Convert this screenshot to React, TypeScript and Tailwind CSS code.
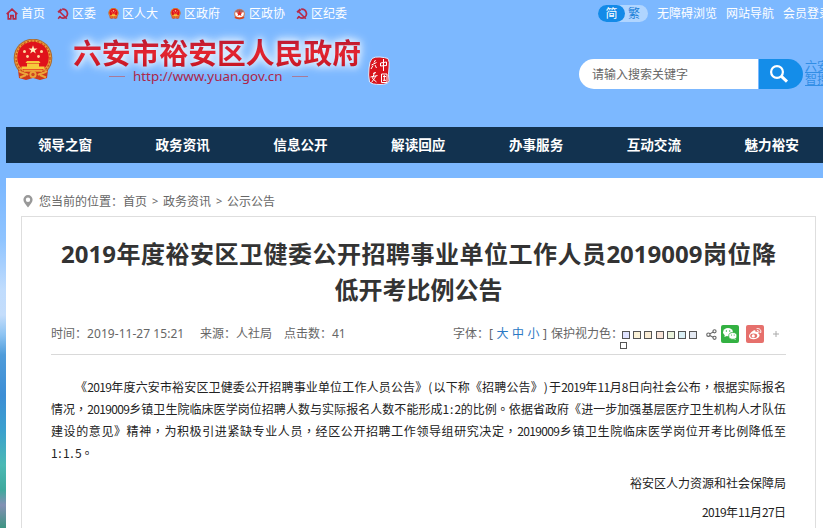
import React from 'react';

const SANS = "font-['Noto_Sans','Noto_Sans_CJK_SC',sans-serif]";

function Mixed({ text }: { text: string }) {
  return (
    <>
      {text.split(/([0-9]+|[:.()]|[，。])/).map((part, i) =>
        /^[0-9]+$/.test(part) ? (
          <span key={i} className="tracking-[-0.66px]">{part}</span>
        ) : /^[:.()]$/.test(part) ? (
          <span key={i} className="inline-block w-[6px] text-center [text-align-last:center]">{part}</span>
        ) : /^[，。]$/.test(part) ? (
          <span key={i} lang="zh-TW" className="font-['Noto_Sans_CJK_TC',sans-serif]">{part}</span>
        ) : (
          <React.Fragment key={i}>{part}</React.Fragment>
        ),
      )}
    </>
  );
}

const HomeIcon = () => (
  <svg viewBox="0 0 12 12" className="h-3 w-3" fill="none" stroke="#b52a48" strokeWidth="1.6">
    <path d="M.7 6.2 6 1.2l5.3 5M2.2 5.2v5.7h2.6V7.6h2.4v3.3h2.6V5.2" />
  </svg>
);

const PartyIcon = () => (
  <svg viewBox="0 0 12 12" className="h-3 w-3" fill="none" stroke="#b52a48">
    <path d="M5.2 1.2C10.5.8 12 7 8.6 9.3 6.5 10.7 4 10 2.4 8.2" strokeWidth="1.7" />
    <path d="M3.2 8.3 1.2 10.8M3 4l6.8 6.8" strokeWidth="1.6" />
    <path d="M1.2 4.4 4.6 1.4" strokeWidth="2.2" />
  </svg>
);

const Emblem = ({ className }: { className: string }) => (
  <svg viewBox="0 0 40 42" className={className}>
    <circle cx="20" cy="19" r="19.3" fill="#a96b35" />
    <circle cx="20" cy="19" r="18.3" fill="#eaa03a" />
    <circle cx="20" cy="19" r="17" fill="none" stroke="#c9501c" strokeWidth="1.4" strokeDasharray="2 1.5" />
    <circle cx="20" cy="18.5" r="15.8" fill="#e0131b" />
    <path d="m20 6.3 1.1 3.1h3.4l-2.7 2 1 3.2-2.800-2-2.800 2 1-3.200-2.700-2h3.400z" fill="#fff0c0" />
    <g fill="#ffd9a0">
      <circle cx="11.500" cy="12.500" r="1.500" /><circle cx="28.500" cy="12.500" r="1.500" />
      <circle cx="14.500" cy="17.500" r="1.400" /><circle cx="25.500" cy="17.500" r="1.400" />
    </g>
    <path d="M12.500 24h15l-1.500-2H14zM14 24.500h12v3H14zM8.500 27.500h23v2.800h-23z" fill="#f6c93c" />
    <path d="M5 31c8 3 22 3 30 0l-1 8-7 2-7-2-7 2-7-2z" fill="#cf3a1b" />
    <path d="M6 32c3 3 7 2 9 4M34 32c-3 3-7 2-9 4M7 38.500l6-2.500M33 38.500l-6-2.500M11 31.800h18" stroke="#eba53a" strokeWidth="1.900" fill="none" />
    <circle cx="20" cy="35.500" r="3.600" fill="#eba53a" />
    <circle cx="20" cy="35.500" r="1.700" fill="#d04a21" />
  </svg>
);

const CppccIcon = () => (
  <svg viewBox="0 0 14 12" className="h-3 w-[13px]">
    <ellipse cx="7" cy="6" rx="6" ry="5.600" fill="#c98a72" />
    <ellipse cx="7" cy="5.500" rx="4.600" ry="4" fill="#fff" />
    <path d="M2 4A5.500 5.500 0 0 1 12 4Z" fill="#a86560" />
    <path d="m7 2 1 2.200 2.400.200-1.900 1.500.600 2.300L7 7l-2.100 1.200.6-2.300-1.900-1.500L6 4.200z" fill="#e02b22" />
    <path d="M2 9.500q5 2.500 10 0" stroke="#d9451f" strokeWidth="1.600" fill="none" />
  </svg>
);

const SealIcon = () => (
  <svg viewBox="0 0 24 30" className="h-[30px] w-6">
    <path d="M5 2.500Q8 .5 13 1t8 1.500q2 3 1 9.500t0 13q-1 3.500-9 3.500T2.500 26q-1.500-7-.5-14 .5-7 3-9.500Z" fill="#d9131c" stroke="#d9ebff" strokeWidth="1" />
    <g stroke="#fff" strokeWidth="1" fill="none">
      <path d="M8.500 4 7 6.500M4.500 9l5-2.500M6 9.500l-2 3.500M8 9l1.500 3M16.500 3v12M13.500 10V7l6-1v3.500zM6 17.500l3-1M3.500 21l7-1.500M7.500 16.500l-2 6 4 3.500M9 20l-4.500 6.500" />
      <path d="M14.500 18h5.500v8.500h-5.500zM16 20.500h3M17.300 19v5.500M16 24.300h3" />
    </g>
  </svg>
);

const topLinks = [
  { label: '首页', icon: <HomeIcon />, w: 'w-[51px]' },
  { label: '区委', icon: <PartyIcon />, w: 'w-[51px]' },
  { label: '区人大', icon: <Emblem className="h-[11px] w-[11px]" />, w: 'w-[62px]' },
  { label: '区政府', icon: <Emblem className="h-[11px] w-[11px]" />, w: 'w-[63px]' },
  { label: '区政协', icon: <CppccIcon />, w: 'w-[63px]' },
  { label: '区纪委', icon: <PartyIcon />, w: 'w-[62px]' },
];

const nav = ['领导之窗', '政务资讯', '信息公开', '解读回应', '办事服务', '互动交流', '魅力裕安'];

const swatches = ['bg-[#dfe3ff]', 'bg-[#fcf3d8]', 'bg-[#faedd5]', 'bg-[#f9e4d8]', 'bg-[#eaf3dc]', 'bg-[#d9eff5]', 'bg-[#e4e9f2]'];

const ShareIcon = () => (
  <svg viewBox="0 0 12 12" className="h-[11px] w-[11px]" fill="none" stroke="#666" strokeWidth="1.200">
    <circle cx="2.600" cy="6.200" r="1.800" /><circle cx="9.300" cy="2.500" r="1.700" /><circle cx="9.300" cy="9.600" r="1.700" />
    <path d="m4.200 5.300 3.600-2M4.200 7l3.600 1.900" />
  </svg>
);

const WechatIcon = () => (
  <svg viewBox="0 0 18 18" className="h-[18px] w-[18px] rounded-[2px] bg-[#33b142]">
    <ellipse cx="7" cy="7.200" rx="4.900" ry="4.100" fill="#fff" />
    <path d="m4 9-.6 3L7 10.500zM14 12.500l.8 2.500-3-1.300z" fill="#fff" />
    <ellipse cx="11.800" cy="10.900" rx="4.100" ry="3.400" fill="#fff" stroke="#33b142" strokeWidth=".8" />
    <g fill="#33b142"><circle cx="5.400" cy="6" r=".7" /><circle cx="8.700" cy="6" r=".7" /><circle cx="10.500" cy="10" r=".6" /><circle cx="13.200" cy="10" r=".6" /></g>
  </svg>
);

const WeiboIcon = () => (
  <svg viewBox="0 0 18 18" className="h-[18px] w-[18px] rounded-[2px] bg-[#e6706c]">
    <path d="M7.500 5.500c1.500-.6 2.300 0 2 1.600 2-.8 3.300-.2 2.800 1.400 3 1.500.3 5.700-4.600 5.700-5.900 0-6.500-4.500-.2-8.700Z" fill="#fff" />
    <ellipse cx="7.700" cy="10.800" rx="3.500" ry="2.300" fill="#e6706c" />
    <circle cx="7.300" cy="10.900" r="1.600" fill="#fff" />
    <path d="M11 3.600c3-.5 4.500 1.700 3.700 4M11.300 5.600c1.400-.1 2 .7 1.700 1.800" fill="none" stroke="#fff" strokeWidth="1" strokeLinecap="round" />
  </svg>
);

const bodyLines = [
  '《2019年度六安市裕安区卫健委公开招聘事业单位工作人员公告》(以下称《招聘公告》)于2019年11月8日向社会公布，根据实际报名',
  '情况，2019009乡镇卫生院临床医学岗位招聘人数与实际报名人数不能形成1:2的比例。依据省政府《进一步加强基层医疗卫生机构人才队伍',
  '建设的意见》精神，为积极引进紧缺专业人员，经区公开招聘工作领导组研究决定，2019009乡镇卫生院临床医学岗位开考比例降低至',
];

export default function App() {
  return (
    <div className={`flex h-[528px] w-[823px] flex-col overflow-hidden bg-[#7cb8ff] bg-[linear-gradient(180deg,#7cb8ff_0px,#7cb8ff_185px,#8fc4ff_240px,#c0dcfd_290px,#c4ddfb_315px,#8cc3f2_335px,#4f9cda_355px,#3d8ed5_395px,#3ba0ce_430px,#4bb9b4_465px,#3fa99d_490px,#8390b4_505px,#3d9482_528px)] text-[12px] ${SANS}`}>
      <div className="flex h-[27px] shrink-0 items-center pl-1.5 text-white">
        <div className="flex flex-1 items-center">
          {topLinks.map((l) => (
            <a key={l.label} className={`flex ${l.w} shrink-0 items-center gap-[3px] whitespace-nowrap leading-[16px]`}>
              {l.icon}
              {l.label}
            </a>
          ))}
        </div>
        <div className="flex w-[225px] shrink-0 items-center whitespace-nowrap">
          <div className="flex h-[17px] w-[50px] shrink-0 rounded-full bg-[#b0d5ff] leading-[17px]">
            <span className="w-[27px] rounded-full bg-[#138ae8] text-center">简</span>
            <span className="pl-[3px] text-[#1a80d8]">繁</span>
          </div>
          <span className="ml-[9px] w-[69px] shrink-0">无障碍浏览</span>
          <span className="w-[57px] shrink-0">网站导航</span>
          <span className="shrink-0">会员登录</span>
        </div>
      </div>

      <div className="flex h-[100px] shrink-0 pl-[13px]">
        <Emblem className="mt-3 h-[42px] w-10" />
        <div className="ml-[20px] mt-[7px] w-[289px]">
          <div className="drop-shadow-[0_0_3px_#e6f2ff]">
            <div className="drop-shadow-[0_0_5px_#e6f2ff]">
              <div className="whitespace-nowrap bg-gradient-to-b from-[#a91430] via-[#e42530] to-[#b80f20] bg-clip-text text-[28.800px] font-bold leading-[38px] text-transparent">六安市裕安区人民政府</div>
            </div>
          </div>
          <div className="-mt-1 flex items-center pl-[36px]">
            <i className="h-px w-4 bg-[#a67998]" />
            <span className="mx-2 w-[151px] whitespace-nowrap text-[13.400px] leading-[16px] text-[#ad2347]">http://www.yuan.gov.cn</span>
            <i className="h-px w-4 bg-[#a67998]" />
          </div>
        </div>
        <div className="ml-[5px] mt-[29px]"><SealIcon /></div>
        <div className="ml-auto mt-8 flex w-[244px] shrink-0">
          <div className="h-[30px] w-[179px] shrink-0 rounded-l-full bg-white pl-[13px] leading-[31px] text-[#666]">请输入搜索关键字</div>
          <div className="ml-px flex h-[30px] w-[44px] shrink-0 items-center justify-center rounded-r-full bg-[#148de9] pr-1">
            <svg viewBox="0 0 20 20" className="h-5 w-5" fill="none" stroke="#fff">
              <circle cx="8" cy="8" r="5.900" strokeWidth="2.200" />
              <path d="m12.200 12.200 5.800 5.500" strokeWidth="3" />
            </svg>
          </div>
          <a className="ml-[2px] mt-px w-[18px] shrink-0 overflow-hidden whitespace-nowrap leading-[13px] text-[#318ee5] underline">六安<br />智搜</a>
        </div>
      </div>

      <nav className="ml-1.5 flex h-9 shrink-0 overflow-hidden bg-[#12324f] text-[13.600px] font-bold leading-9 text-white">
        {nav.map((n) => (
          <a key={n} className="w-[117.800px] shrink-0 whitespace-nowrap text-center">{n}</a>
        ))}
      </nav>

      <main className="ml-1.5 mt-[15px] flex-1 bg-white pl-[15px]">
        <div className="flex h-[38px] items-center pt-[9px] text-[#666]">
          <svg viewBox="0 0 10 13" className="ml-[2px] mr-[6px] h-[13px] w-[10px]">
            <path fillRule="evenodd" d="M5 12.500C2.500 9.200.4 7 .4 4.700a4.600 4.600 0 0 1 9.200 0C9.600 7 7.500 9.200 5 12.500ZM5 2.500a2.200 2.200 0 1 0 0 4.400 2.200 2.200 0 0 0 0-4.400Z" fill="#999" />
          </svg>
          <span className="w-[84px] whitespace-nowrap">您当前的位置：</span>
          <span className="w-[29px]">首页</span><span className="w-[11px] text-[11px]">&gt;</span>
          <span className="w-[53px]">政务资讯</span><span className="w-[11px] text-[11px]">&gt;</span>
          <span>公示公告</span>
        </div>
        <article className="h-[320px] w-[795px] border border-[#dedede] px-[29px]">
          <h1 className="pt-[19px] text-center text-[24px] font-bold leading-[36px] text-[#333]">
            <span className="mx-[10px] block whitespace-nowrap [text-align-last:justify]">2019年度裕安区卫健委公开招聘事业单位工作人员2019009岗位降</span>
            <span className="block">低开考比例公告</span>
          </h1>
          <div className="mt-[9px] flex h-[38px] border-b border-[#d9d9d9] pt-[9px] leading-[16px] text-[#666]">
            <span className="w-[149px] whitespace-nowrap tracking-[0.04px]">时间：2019-11-27 15:21</span>
            <span className="w-[84px]">来源：人社局</span>
            <span>点击数：41</span>
            <div className="ml-auto flex w-[333px] shrink-0 whitespace-nowrap">
              <span className="w-9 shrink-0">字体：</span>
              <span className="flex w-[58px] shrink-0 justify-between text-[#2a78c4]"><i className="not-italic text-[#666]">[</i><b className="font-normal">大</b><b className="font-normal">中</b><b className="font-normal">小</b><i className="not-italic text-[#666]">]</i></span>
              <span className="w-[75px] shrink-0 pl-1">保护视力色：</span>
              <div className="flex w-[82px] shrink-0 flex-wrap content-start gap-x-[3.200px] gap-y-[3px] pt-[5px]">
                {swatches.map((c) => <i key={c} className={`h-2 w-2 border border-[#555] ${c}`} />)}
                <i className="-ml-[2px] h-[7px] w-[7px] border border-[#555]" />
              </div>
              <div className="-mt-px flex h-[18px] items-center pl-[2px]">
                <ShareIcon />
                <span className="ml-1"><WechatIcon /></span>
                <span className="ml-[7px]"><WeiboIcon /></span>
                <svg viewBox="0 0 8 8" className="ml-2 h-2 w-2 shrink-0"><path d="M4 1v6M1 4h6" stroke="#aaa" /></svg>
              </div>
            </div>
          </div>
          <div className="pt-[21px] leading-[22px] text-[#222] [text-spacing-trim:space-all] font-['Noto_Sans_CJK_SC',sans-serif]">
            {bodyLines.map((t, i) => (
              <p key={i} className={`h-[22px] whitespace-nowrap [text-align-last:justify] ${i === 0 ? 'pl-6' : ''}`}><Mixed text={t} /></p>
            ))}
            <p className="h-[22px]"><Mixed text="1:1.5。" /></p>
            <p className="mt-2 text-right">裕安区人力资源和社会保障局</p>
            <p className="mt-[7px] text-right"><Mixed text="2019年11月27日" /></p>
          </div>
        </article>
      </main>
    </div>
  );
}
